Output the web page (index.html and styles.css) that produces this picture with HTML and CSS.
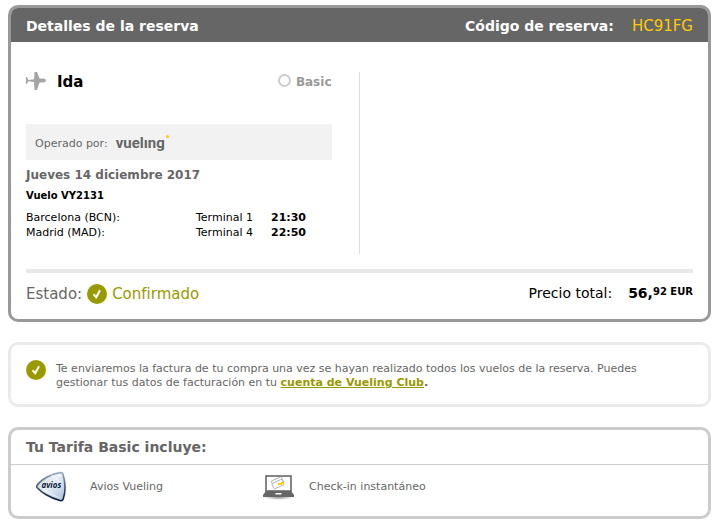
FILE: index.html
```html
<!DOCTYPE html>
<html lang="es">
<head>
<meta charset="utf-8">
<meta name="viewport" content="width=device-width, initial-scale=1">
<title>Detalles de la reserva</title>
<link rel="stylesheet" href="styles.css">
</head>
<body>
<main>
  <section class="card booking">
    <header class="booking-header">
      <h1>Detalles de la reserva</h1>
      <p class="locator"><strong>Código de reserva:</strong><span class="code">HC91FG</span></p>
    </header>
    <div class="booking-body">
      <div class="legs">
        <article class="leg">
          <div class="leg-title">
            <svg class="plane" viewBox="0 0 20 18" aria-hidden="true"><path d="M0 5h1l1.200 3L8 7.300 8.500 0H11l2.600 6.400h4Q20 6.900 20 8.500t-2.400 1.900h-4L11 18H8.500L8 10l-5.800-.8L1 12H0z"/></svg>
            <h2>Ida</h2>
            <p class="fare"><span class="ring"></span>Basic</p>
          </div>
          <p class="operator">Operado por: <span class="logo">vuelıng</span></p>
          <p class="date">Jueves 14 diciembre 2017</p>
          <p class="flight">Vuelo VY2131</p>
          <table class="stops">
            <tr><td class="city">Barcelona (BCN):</td><td class="terminal">Terminal 1</td><td class="time">21:30</td></tr>
            <tr><td class="city">Madrid (MAD):</td><td class="terminal">Terminal 4</td><td class="time">22:50</td></tr>
          </table>
        </article>
      </div>
      <footer class="summary">
        <p class="status">Estado:
          <svg class="check" viewBox="0 0 20 20" aria-hidden="true"><circle cx="10" cy="10" r="10"/><path d="M6.500 10.300l2.700 2.900 3.800-7"/></svg>
          <span class="confirmed">Confirmado</span></p>
        <p class="total">Precio total:<span class="price">56,<span class="cents">92 EUR</span></span></p>
      </footer>
    </div>
  </section>

  <section class="card notice">
    <svg class="check" viewBox="0 0 20 20" aria-hidden="true"><circle cx="10" cy="10" r="10"/><path d="M6.500 10.300l2.700 2.900 3.800-7"/></svg>
    <p>Te enviaremos la factura de tu compra una vez se hayan realizado todos los vuelos de la reserva. Puedes gestionar tus datos de facturación en tu <a href="#club">cuenta de Vueling Club</a><b>.</b></p>
  </section>

  <section class="card includes">
    <h2>Tu Tarifa Basic incluye:</h2>
    <ul>
      <li>
        <svg class="perk" viewBox="0 0 40 32" aria-hidden="true">
          <defs><linearGradient id="shield" x1="0" y1="0" x2="1" y2="1"><stop offset="0" stop-color="#a9bccd"/><stop offset=".45" stop-color="#e9f1f8"/><stop offset="1" stop-color="#a6bdd6"/></linearGradient>
          <linearGradient id="rim" x1="0" y1="0" x2="0" y2="1"><stop offset="0" stop-color="#9aa9b9"/><stop offset=".5" stop-color="#45566e"/><stop offset="1" stop-color="#0b1c3c"/></linearGradient></defs>
          <path d="M1 14.500C5 8 16 2.500 24.500 1.500q2.200 0 2.700 2.500c2.300 8 2.300 17 0 24q-.7 2.300-3.200 1.600C14 27 5 21 1 16.500q-.7-1 0-2z" fill="url(#shield)" stroke="url(#rim)" stroke-width="1.600"/>
          <path d="M4 15C9 9 17 5 25 4M15 3.500l9 8M9 20l15 7" fill="none" stroke="#fff" stroke-opacity=".6"/>
          <text x="5.500" y="17" class="avios">avios</text>
        </svg>
        Avios Vueling
      </li>
      <li>
        <svg class="perk" viewBox="0 0 40 32" aria-hidden="true">
          <defs><radialGradient id="shade"><stop offset="0" stop-color="#999"/><stop offset="1" stop-color="#fff"/></radialGradient></defs>
          <ellipse cx="23.500" cy="26.500" rx="15" ry="2.500" fill="url(#shade)"/>
          <rect x="11" y="5" width="25" height="15" fill="#fff" stroke="#666" stroke-width="1.600"/>
          <path d="M11 20h25l3 4v2H8v-2z" fill="#666"/>
          <path d="M20.500 22h6v1.500h-6z" fill="#fff"/>
          <g transform="rotate(-24 23 12)" fill="#fff" stroke="#aaa" stroke-width=".8"><rect x="17.500" y="7.500" width="11" height="7" rx="1"/><rect x="17" y="10" width="11" height="6" rx="1"/></g>
          <path d="M23 12h3v-1h3v2h-2v1h-4z" fill="#fc0"/>
        </svg>
        Check-in instantáneo
      </li>
    </ul>
  </section>
</main>
</body>
</html>
```
FILE: styles.css
```css
* {
  box-sizing: border-box;
}

body {
  margin: 5px 6px 7px 8px;
  background: #fff;
  color: #666;
  font: 11px/14px Verdana, "DejaVu Sans", sans-serif;
}

h1, h2, p, ul {
  margin: 0;
  padding: 0;
}

main {
  display: grid;
  gap: 20px;
}

.card {
  border: 3px solid #ccc;
  border-radius: 10px;
  overflow: hidden;
}

/* Booking details */
.booking {
  border-color: #999;
}

.booking-header {
  display: flex;
  justify-content: space-between;
  padding: 2px 15px 0;
  background: #666;
  color: #fff;
  font-size: 14px;
  line-height: 32px;
}

.booking-header h1 {
  font-size: 14px;
}

.locator {
  display: flex;
  gap: 18px;
}

.code {
  color: #fc0;
  font-size: 15px;
}

.booking-body {
  padding: 30px 15px 12px;
}

.legs {
  display: grid;
  grid-template-columns: 1fr 1fr;
}

.leg {
  padding: 0 27px 14px 0;
  border-right: 1px solid #ddd;
}

.leg-title {
  display: flex;
  align-items: center;
  height: 20px;
  color: #000;
}

.leg-title h2 {
  font-size: 15px;
  line-height: 20px;
}

.plane {
  align-self: flex-start;
  width: 20px;
  height: 18px;
  margin-right: 11px;
  fill: #a5a5a5;
}

.fare {
  display: flex;
  align-items: center;
  gap: 5px;
  margin-left: auto;
  color: #999;
  font-size: 12px;
  font-weight: bold;
  line-height: 20px;
}

.ring {
  width: 13px;
  height: 13px;
  margin-bottom: 3px;
  border: 2px solid #ccc;
  border-radius: 50%;
}

.operator {
  display: flex;
  align-items: center;
  gap: 8px;
  height: 36px;
  margin: 32px 0 8px;
  padding: 4px 9px 0;
  background: #f2f2f2;
}

.logo {
  display: flex;
  font: bold 15px/20px "Liberation Sans Narrow", Roboto, sans-serif;
  padding-bottom: 3px;
}

.logo::after {
  width: 3px;
  height: 3px;
  margin: 2px 0 0 1px;
  border-radius: 50%;
  background: #fc0;
  content: "";
}

.date {
  font-size: 12px;
  font-weight: bold;
}

.flight {
  margin: 7px 0;
  color: #000;
  font-size: 10px;
  font-weight: bold;
}

.stops {
  border-collapse: collapse;
  color: #000;
  line-height: 15px;
}

.stops td {
  padding: 0;
}

.city {
  width: 170px;
}

.terminal {
  width: 75px;
}

.time {
  font-weight: bold;
}

.summary {
  display: flex;
  justify-content: space-between;
  margin-top: 15px;
  padding-top: 7px;
  border-top: 4px solid #e8e8e8;
  line-height: 26px;
}

.status {
  display: flex;
  align-items: center;
  gap: 5px;
  padding-top: 1px;
  font-size: 15px;
}

.confirmed {
  color: #990;
}

.total {
  display: flex;
  gap: 16px;
  color: #000;
  font-size: 14px;
}

.price {
  display: flex;
  font-weight: bold;
}

.cents {
  font-size: 10px;
  line-height: 24px;
}

.check {
  flex: none;
  width: 20px;
  height: 20px;
  fill: #990;
}

.check path {
  fill: none;
  stroke: #fff;
  stroke-width: 2;
}

/* Invoice notice */
.notice {
  display: flex;
  gap: 10px;
  padding: 15px 35px 14px 15px;
  border-color: #ebebeb;
}

.notice p {
  padding-top: 2px;
}

.notice a {
  color: #990;
  font-weight: bold;
}

/* Fare benefits */
.includes h2 {
  padding: 0 15px;
  border-bottom: 1px solid #ccc;
  font-size: 14px;
  line-height: 34px;
}

.includes ul {
  display: grid;
  grid-template-columns: repeat(3, 1fr);
  padding: 6px 15px 13px 25px;
  list-style: none;
}

.includes li {
  display: flex;
  align-items: center;
  gap: 14px;
}

.perk {
  width: 40px;
  height: 32px;
}

.avios {
  fill: #0b1c3c;
  font: italic bold 8px "Open Sans", sans-serif;
}
```
